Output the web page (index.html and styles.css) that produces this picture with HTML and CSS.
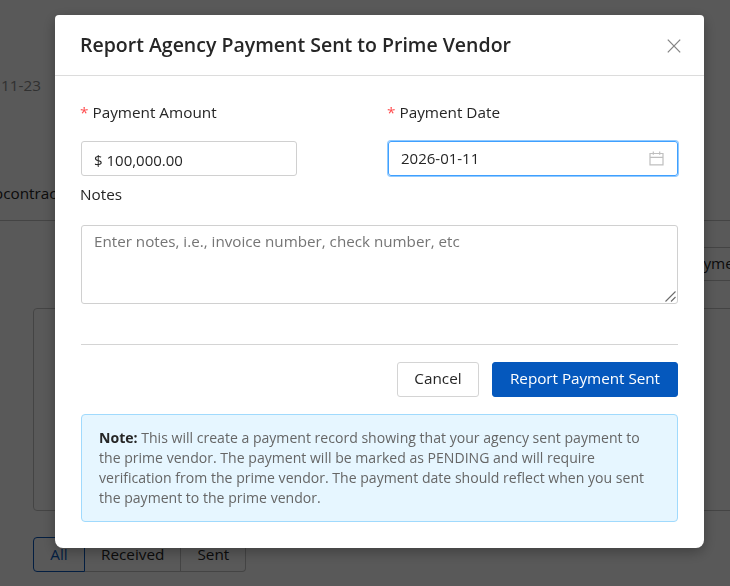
FILE: index.html
```html
<!DOCTYPE html>
<html lang="en">
<head>
    <meta charset="UTF-8">
    <meta name="viewport" content="width=device-width, initial-scale=1.0">
    <title>Report Agency Payment</title>
    <link rel="stylesheet" href="styles.css">
</head>
<body>

    <div class="page">
        <div class="page-date">11-23</div>
        <div class="tabs">
            <div class="tab">Subcontrac</div>
        </div>
        <div class="toolbar">
            <button class="toolbar-button">Payments</button>
        </div>
        <div class="card"></div>
        <div class="filter-group">
            <button class="filter active">All</button>
            <button class="filter">Received</button>
            <button class="filter">Sent</button>
        </div>
    </div>

    <div class="modal-mask">
        <div class="modal">
            <div class="modal-header">
                <h1>Report Agency Payment Sent to Prime Vendor</h1>
                <button class="close-button" aria-label="Close">
                    <svg width="14" height="14" viewBox="0 0 14 14" fill="none" stroke="#858585" stroke-width="1.3">
                        <path d="M0.8 0.6L13.2 13.4M13.2 0.6L0.8 13.4"/>
                    </svg>
                </button>
            </div>

            <div class="modal-body">
                <div class="form-row">
                    <div class="form-item">
                        <label class="required" for="payment-amount">Payment Amount</label>
                        <input type="text" id="payment-amount" class="amount-input" value="$ 100,000.00">
                    </div>
                    <div class="form-item">
                        <label class="required" for="payment-date">Payment Date</label>
                        <div class="date-picker">
                            <input type="text" id="payment-date" value="2026-01-11">
                            <svg width="15" height="15" viewBox="0 0 15 15" fill="none" stroke="#bfbfbf" stroke-width="1.2">
                                <path d="M1 2.5H14V13.9H1ZM1 6.4H14M4.3 0.6V3.8M10.7 0.6V3.8"/>
                            </svg>
                        </div>
                    </div>
                </div>

                <div class="notes-item">
                    <label for="notes">Notes</label>
                    <div class="textarea-wrapper">
                        <textarea id="notes" placeholder="Enter notes, i.e., invoice number, check number, etc"></textarea>
                        <svg class="resize-grip" width="11" height="11" viewBox="0 0 11 11" fill="none" stroke="#6b6b6b" stroke-width="1.1">
                            <path d="M0.5 10.5L10.5 0.5M6 10.5L10.5 6"/>
                        </svg>
                    </div>
                </div>

                <div class="actions">
                    <button class="button">Cancel</button>
                    <button class="button primary">Report Payment Sent</button>
                </div>

                <div class="note">
                    <strong>Note:</strong> This will create a payment record showing that your agency sent payment to the prime vendor. The payment will be marked as PENDING and will require verification from the prime vendor. The payment date should reflect when you sent the payment to the prime vendor.
                </div>
            </div>
        </div>
    </div>

</body>
</html>
```
FILE: styles.css
```css
* {
    box-sizing: border-box;
}
body {
    margin: 0;
    height: 586px;
    overflow: hidden;
    font-family: "Open Sans", sans-serif;
    font-size: 15.3px;
    line-height: 24px;
    color: #262626;
    background-color: #fff;
}
button, input, textarea {
    font-family: inherit;
    font-size: inherit;
    color: inherit;
}

/* Page behind the modal */
.page {
    height: 586px;
    padding-top: 73px;
    overflow: hidden;
}
.page-date {
    padding-left: 1px;
    color: #8c8c8c;
}
.tabs {
    display: flex;
    height: 124px;
    align-items: flex-end;
    padding-bottom: 15px;
    border-bottom: 1px solid #c4c4c4;
}
.tab {
    margin-left: -24px;
}
.toolbar {
    display: flex;
    justify-content: flex-end;
    margin-top: 26px;
    margin-right: -41px;
}
.toolbar-button {
    height: 34px;
    padding: 0 14px 3px;
    border: 1px solid #c4c4c4;
    background: none;
}
.card {
    height: 203px;
    margin: 27px -10px 26px 33px;
    border: 1px solid #c4c4c4;
    border-radius: 4px;
}
.filter-group {
    display: flex;
    margin-left: 33px;
}
.filter {
    height: 35px;
    padding: 0 16px 1px;
    border: 1px solid #c4c4c4;
    border-left: none;
    background: none;
}
.filter.active {
    width: 52px;
    border: 1px solid #0958bb;
    border-radius: 4px 0 0 4px;
    color: #0958bb;
}
.filter:last-child {
    border-radius: 0 4px 4px 0;
}

/* Modal */
.modal-mask {
    position: fixed;
    inset: 0;
    padding: 15px 26px 0 55px;
    background-color: rgba(0, 0, 0, 0.65);
}
.modal {
    height: 533px;
    background-color: #fff;
    border-radius: 4px 4px 8px 8px;
    box-shadow: 0 4px 14px rgba(0, 0, 0, 0.3);
}
.modal-header {
    display: flex;
    align-items: center;
    justify-content: space-between;
    height: 61px;
    padding: 0 23px 0 25px;
    border-bottom: 1px solid #dcdcdc;
}
.modal-header h1 {
    margin: 0;
    font-size: 19.5px;
    font-weight: 600;
}
.close-button {
    display: flex;
    padding: 2px 0 0;
    border: none;
    background: none;
}
.modal-body {
    padding: 24px 26px 0;
}
label {
    display: block;
}
.required::before {
    content: "*";
    margin-right: 4px;
    color: #ff4d4f;
}
.form-row {
    display: grid;
    grid-template-columns: 216px 290px;
    column-gap: 91px;
}
.form-item label {
    margin: 0 0 17px -1px;
}
.amount-input, .date-picker {
    width: 100%;
    height: 35px;
    padding: 2px 12px 0;
    border: 1px solid #d0d0d0;
    border-radius: 3px;
    font-size: 15px;
}
.date-picker {
    display: flex;
    align-items: center;
    padding-top: 0;
    padding-right: 13px;
    border-color: #40a0ff;
    box-shadow: 0 0 0 1px #91caff;
}
.date-picker input {
    flex: 1;
    min-width: 0;
    padding: 0 0 1px;
    border: none;
    outline: none;
}
.notes-item label {
    margin: 6px 0 19px -1px;
}
.textarea-wrapper {
    position: relative;
}
textarea {
    display: block;
    width: 100%;
    height: 79px;
    padding: 3px 12px;
    border: 1px solid #d0d0d0;
    border-radius: 3px;
    font-size: 15.2px;
    line-height: 24px;
    resize: none;
}
textarea::placeholder {
    color: #757575;
}
.resize-grip {
    position: absolute;
    right: 2px;
    bottom: 2px;
}
.actions {
    display: flex;
    justify-content: flex-end;
    gap: 13px;
    margin-top: 40px;
    padding: 17px 0;
    border-top: 1px solid #d4d4d4;
}
.button {
    width: 82px;
    height: 35px;
    padding: 0 0 4px;
    border: 1px solid #d4d4d4;
    border-radius: 3px;
    background-color: #fff;
}
.button.primary {
    width: 186px;
    border-color: #0558bd;
    background-color: #0558bd;
    color: #fff;
    font-weight: 500;
    letter-spacing: -0.05px;
}
.note {
    height: 108px;
    padding: 13px 17px;
    border: 1px solid #a0dafd;
    border-radius: 4px;
    background-color: #e6f6ff;
    color: #666;
    font-size: 14.07px;
    line-height: 20px;
}
.note strong {
    color: #262626;
}
```
